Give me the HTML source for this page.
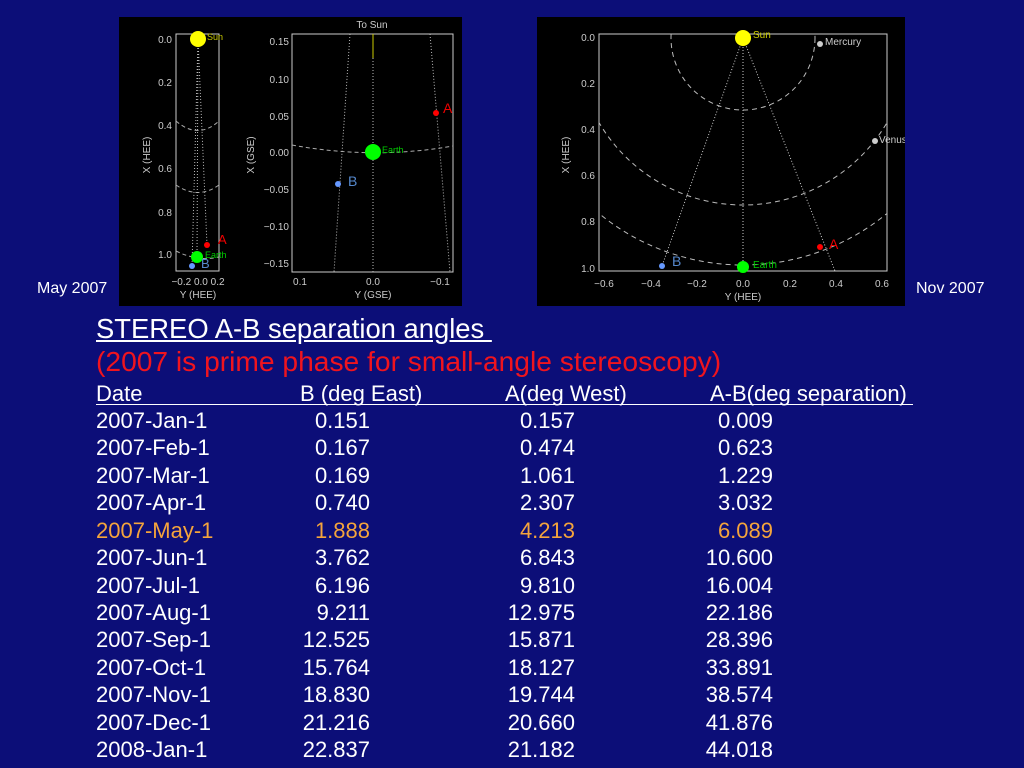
<!DOCTYPE html>
<html><head><meta charset="utf-8"><style>
html,body{margin:0;padding:0;}
body{width:1024px;height:768px;background:#0c0e78;position:relative;overflow:hidden;font-family:"Liberation Sans",Arial,sans-serif;color:#fff;}
.a{position:absolute;white-space:nowrap;}
.side{font-size:16px;top:280px;}
.t{left:96px;}
.r{position:absolute;left:0;width:1024px;height:27px;font-size:22px;}
.r span{position:absolute;top:-1px;}
.c0{left:96px;}
.c1{right:654px;}
.c2{right:449px;}
.c3{right:251px;}
.or{color:#f4a43c;}
svg text{font-family:"Liberation Sans",sans-serif;}
</style></head><body>
<div class="a side" style="left:37px">May 2007</div>
<div class="a side" style="left:916px">Nov 2007</div>

<svg class="a" style="left:119px;top:17px" width="343" height="289" viewBox="119 17 343 289">
<rect x="119" y="17" width="343" height="289" fill="#000"/>
<g fill="none" stroke="#ccc" stroke-width="1">
<rect x="176" y="34" width="43" height="237"/>
<rect x="292" y="34" width="161" height="238"/>
</g>
<g fill="none" stroke="#aaa" stroke-dasharray="4,3">
<path d="M176 121 Q198 140 219 121"/>
<path d="M176 185 Q198 200 219 185"/>
<path d="M176 251 Q198 262 219 257"/>
<path d="M292 145 Q373 160 453 146"/>
</g>
<g fill="none" stroke="#bbb" stroke-dasharray="1,2">
<path d="M198 39 L192 266"/><path d="M198 39 L197 257"/><path d="M198 39 L207 245"/>
<path d="M373 34 L373 272"/><path d="M350 34 L334 272"/><path d="M430 34 L450 272"/>
</g>
<line x1="373" y1="34" x2="373" y2="58" stroke="#cc0"/>
<circle cx="198" cy="39" r="8" fill="#ff0"/>
<circle cx="197" cy="257" r="6" fill="#0f0"/>
<circle cx="207" cy="245" r="3" fill="#f00"/>
<circle cx="192" cy="266" r="3" fill="#69f"/>
<circle cx="373" cy="152" r="8" fill="#0f0"/>
<circle cx="338" cy="184" r="3" fill="#69f"/>
<circle cx="436" cy="113" r="3" fill="#f00"/>
<g font-size="10" fill="#ccc" text-anchor="end">
<text x="172" y="43">0.0</text><text x="172" y="86">0.2</text><text x="172" y="129">0.4</text><text x="172" y="172">0.6</text><text x="172" y="216">0.8</text><text x="172" y="258">1.0</text>
<text x="289" y="45">0.15</text><text x="289" y="83">0.10</text><text x="289" y="120">0.05</text><text x="289" y="156">0.00</text><text x="289" y="193">−0.05</text><text x="289" y="230">−0.10</text><text x="289" y="267">−0.15</text>
</g>
<g font-size="10" fill="#ccc" text-anchor="middle">
<text x="198" y="285">−0.2 0.0 0.2</text><text x="198" y="298">Y (HEE)</text>
<text x="300" y="285">0.1</text><text x="373" y="285">0.0</text><text x="440" y="285">−0.1</text>
<text x="373" y="298">Y (GSE)</text><text x="372" y="28">To Sun</text>
<text transform="translate(150,155) rotate(-90)">X (HEE)</text>
<text transform="translate(254,155) rotate(-90)">X (GSE)</text>
</g>
<text x="207" y="40" font-size="9" fill="#cc0">Sun</text>
<text x="205" y="258" font-size="9" fill="#0c0">Earth</text>
<text x="218" y="244" font-size="13" fill="#e00">A</text>
<text x="201" y="268" font-size="13" fill="#58c">B</text>
<text x="382" y="153" font-size="9" fill="#0c0">Earth</text>
<text x="443" y="113" font-size="14" fill="#e00">A</text>
<text x="348" y="186" font-size="14" fill="#58c">B</text>
</svg>

<svg class="a" style="left:537px;top:17px" width="368" height="289" viewBox="537 17 368 289">
<defs><clipPath id="cf"><rect x="599" y="34" width="288" height="237"/></clipPath></defs>
<rect x="537" y="17" width="368" height="289" fill="#000"/>
<rect x="599" y="34" width="288" height="237" fill="none" stroke="#ccc"/>
<g clip-path="url(#cf)" fill="none" stroke="#bbb" stroke-dasharray="5,4">
<circle cx="743" cy="38" r="72"/>
<circle cx="743" cy="38" r="167"/>
<circle cx="743" cy="38" r="227"/>
</g>
<g fill="none" stroke="#ccc" stroke-dasharray="1,2">
<path d="M743 38 L662 266"/><path d="M743 38 L743 267"/><path d="M743 38 L835 271"/>
</g>
<circle cx="743" cy="38" r="8" fill="#ff0"/>
<circle cx="743" cy="267" r="6" fill="#0f0"/>
<circle cx="662" cy="266" r="3" fill="#69f"/>
<circle cx="820" cy="247" r="3" fill="#f00"/>
<circle cx="820" cy="44" r="3" fill="#ccc"/>
<circle cx="875" cy="141" r="3" fill="#ccc"/>
<g font-size="10" fill="#ccc" text-anchor="end">
<text x="595" y="41">0.0</text><text x="595" y="87">0.2</text><text x="595" y="133">0.4</text><text x="595" y="179">0.6</text><text x="595" y="225">0.8</text><text x="595" y="272">1.0</text>
</g>
<g font-size="10" fill="#ccc" text-anchor="middle">
<text x="604" y="287">−0.6</text><text x="651" y="287">−0.4</text><text x="697" y="287">−0.2</text><text x="743" y="287">0.0</text><text x="790" y="287">0.2</text><text x="836" y="287">0.4</text><text x="882" y="287">0.6</text>
<text x="743" y="300">Y (HEE)</text>
<text transform="translate(569,155) rotate(-90)">X (HEE)</text>
</g>
<text x="753" y="38" font-size="10" fill="#cc0">Sun</text>
<text x="825" y="45" font-size="10" fill="#ccc">Mercury</text>
<text x="879" y="143" font-size="10" fill="#ccc">Venus</text>
<text x="753" y="268" font-size="10" fill="#0c0">Earth</text>
<text x="829" y="249" font-size="14" fill="#e00">A</text>
<text x="672" y="266" font-size="14" fill="#58c">B</text>
</svg>

<div class="a t" style="top:313px;font-size:27.4px;text-decoration:underline">STEREO A-B separation angles&nbsp;</div>
<div class="a t" style="top:345px;font-size:28.2px;color:#f0141e">(2007 is prime phase for small-angle stereoscopy)</div>

<div class="r" style="top:382px"><div class="a" style="left:96px;width:817px;top:22px;border-top:1px solid #fff"></div>
<span class="c0">Date</span><span style="left:300px">B (deg East)</span><span style="left:505px">A(deg West)</span><span style="left:710px">A-B(deg separation)</span></div>
<div class="r" style="top:409px"><span class="c0">2007-Jan-1</span><span class="c1">0.151</span><span class="c2">0.157</span><span class="c3">0.009</span></div>
<div class="r" style="top:436px"><span class="c0">2007-Feb-1</span><span class="c1">0.167</span><span class="c2">0.474</span><span class="c3">0.623</span></div>
<div class="r" style="top:464px"><span class="c0">2007-Mar-1</span><span class="c1">0.169</span><span class="c2">1.061</span><span class="c3">1.229</span></div>
<div class="r" style="top:491px"><span class="c0">2007-Apr-1</span><span class="c1">0.740</span><span class="c2">2.307</span><span class="c3">3.032</span></div>
<div class="r or" style="top:519px"><span class="c0">2007-May-1</span><span class="c1">1.888</span><span class="c2">4.213</span><span class="c3">6.089</span></div>
<div class="r" style="top:546px"><span class="c0">2007-Jun-1</span><span class="c1">3.762</span><span class="c2">6.843</span><span class="c3">10.600</span></div>
<div class="r" style="top:574px"><span class="c0">2007-Jul-1</span><span class="c1">6.196</span><span class="c2">9.810</span><span class="c3">16.004</span></div>
<div class="r" style="top:601px"><span class="c0">2007-Aug-1</span><span class="c1">9.211</span><span class="c2">12.975</span><span class="c3">22.186</span></div>
<div class="r" style="top:628px"><span class="c0">2007-Sep-1</span><span class="c1">12.525</span><span class="c2">15.871</span><span class="c3">28.396</span></div>
<div class="r" style="top:656px"><span class="c0">2007-Oct-1</span><span class="c1">15.764</span><span class="c2">18.127</span><span class="c3">33.891</span></div>
<div class="r" style="top:683px"><span class="c0">2007-Nov-1</span><span class="c1">18.830</span><span class="c2">19.744</span><span class="c3">38.574</span></div>
<div class="r" style="top:711px"><span class="c0">2007-Dec-1</span><span class="c1">21.216</span><span class="c2">20.660</span><span class="c3">41.876</span></div>
<div class="r" style="top:738px"><span class="c0">2008-Jan-1</span><span class="c1">22.837</span><span class="c2">21.182</span><span class="c3">44.018</span></div>
</body></html>
